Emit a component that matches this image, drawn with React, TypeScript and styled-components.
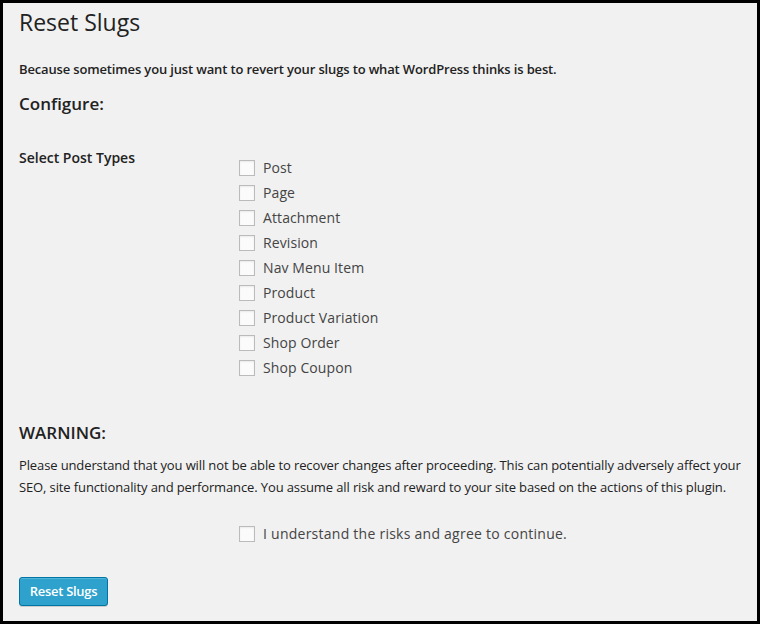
import React from "react";
import styled, { createGlobalStyle } from "styled-components";

const Global = createGlobalStyle`
  html, body { margin: 0; padding: 0; }
  body {
    width: 760px;
    height: 624px;
    overflow: hidden;
    background: #000;
    font-family: "Open Sans", "Noto Sans", sans-serif;
    color: #444;
  }
  * { box-sizing: border-box; }
`;

const Frame = styled.div`
  width: 760px;
  height: 624px;
  border: 3px solid #000;
  background: #f1f1f1;
  padding: 0 16px;
  display: flex;
  flex-direction: column;
`;

const Title = styled.h2`
  margin: 0;
  padding: 5px 0 0;
  font-size: 23px;
  font-weight: 400;
  line-height: 29px;
  color: #222;
`;

const Lead = styled.p`
  margin: 22px 0 0;
  font-size: 13px;
  font-weight: 600;
  line-height: 20px;
  letter-spacing: -0.15px;
  color: #222;
`;

const Heading = styled.h3<{ $top: number }>`
  margin: ${(p) => p.$top}px 0 0;
  font-size: 17px;
  font-weight: 600;
  line-height: 24px;
  color: #222;
`;

const FormRow = styled.div`
  display: grid;
  grid-template-columns: 220px 1fr;
  margin-top: 32px;
`;

const RowLabel = styled.div`
  font-size: 14px;
  font-weight: 600;
  line-height: 20px;
  color: #222;
`;

const OptionList = styled.div`
  display: flex;
  flex-direction: column;
  margin-top: 7px;
`;

const Option = styled.label<{ $spacing?: number }>`
  display: flex;
  align-items: center;
  gap: 8px;
  height: 25px;
  font-size: 14px;
  line-height: 20px;
  letter-spacing: ${(p) => p.$spacing ?? 0.1}px;
  color: #444;
`;

const Box = styled.span`
  width: 16px;
  height: 16px;
  border: 1px solid #bbb;
  background: #fbfbfb;
  box-shadow: inset 0 1px 2px rgba(0, 0, 0, 0.07);
  flex: none;
`;

const Warning = styled.p`
  margin: 9px -3px 0 0;
  font-size: 13px;
  line-height: 22px;
  letter-spacing: -0.12px;
  color: #222;
`;

const Agree = styled.div`
  margin-top: 23px;
  padding-left: 220px;
`;

const Button = styled.button`
  margin-top: 31px;
  align-self: flex-start;
  width: 89px;
  height: 29px;
  padding: 0;
  border: 1px solid #0074a2;
  border-radius: 3px;
  background: #2ea2cc;
  box-shadow: inset 0 1px 0 rgba(120, 200, 230, 0.5), 0 1px 0 rgba(0, 0, 0, 0.15);
  color: #fff;
  font-family: "Open Sans", "Noto Sans", sans-serif;
  font-size: 13px;
  font-weight: 600;
  line-height: 27px;
  letter-spacing: -0.3px;
`;

const postTypes = [
  "Post",
  "Page",
  "Attachment",
  "Revision",
  "Nav Menu Item",
  "Product",
  "Product Variation",
  "Shop Order",
  "Shop Coupon",
];

export default function App() {
  return (
    <>
      <Global />
      <Frame>
        <Title>Reset Slugs</Title>
        <Lead>Because sometimes you just want to revert your slugs to what WordPress thinks is best.</Lead>
        <Heading $top={13}>Configure:</Heading>
        <FormRow>
          <RowLabel>Select Post Types</RowLabel>
          <OptionList>
            {postTypes.map((t) => (
              <Option key={t}>
                <Box />
                {t}
              </Option>
            ))}
          </OptionList>
        </FormRow>
        <Heading $top={41}>WARNING:</Heading>
        <Warning>
          Please understand that you will not be able to recover changes after proceeding. This can potentially adversely affect your SEO, site functionality and performance. You assume all risk and reward to your site based on the actions of this plugin.
        </Warning>
        <Agree>
          <Option $spacing={0.25}>
            <Box />
            I understand the risks and agree to continue.
          </Option>
        </Agree>
        <Button>Reset Slugs</Button>
      </Frame>
    </>
  );
}
